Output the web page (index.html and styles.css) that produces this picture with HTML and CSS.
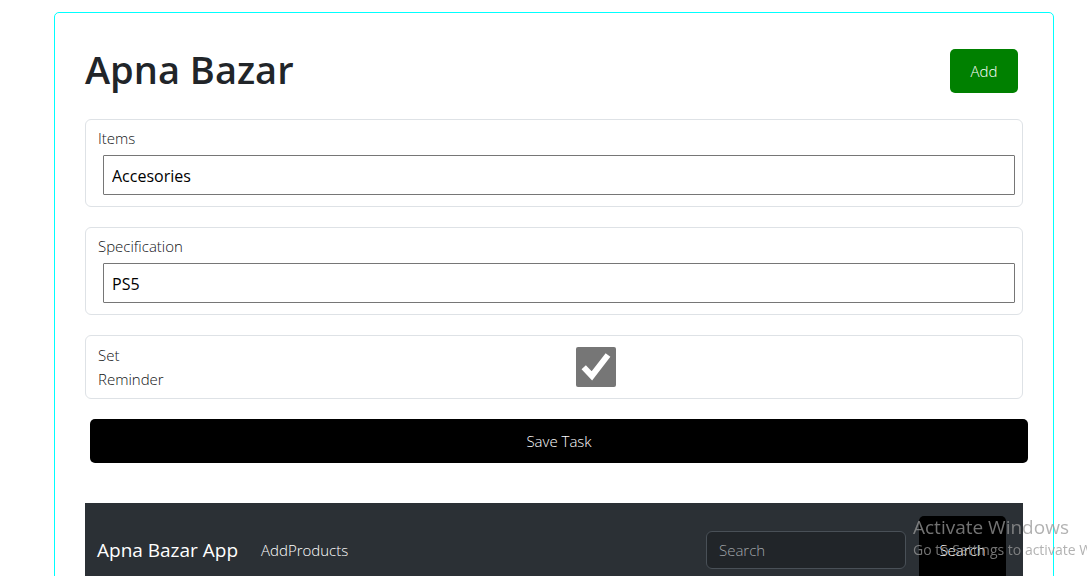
FILE: index.html
```html
<!DOCTYPE html>
<html lang="en">
<head>
<meta charset="utf-8">
<meta name="viewport" content="width=device-width, initial-scale=1">
<title>Apna Bazar</title>
<link rel="stylesheet" href="styles.css">
</head>
<body>
<main class="container">
  <header class="header">
    <h1 class="title">Apna Bazar</h1>
    <button class="btn btn-add" type="button">Add</button>
  </header>
  <form class="task-form">
    <div class="field">
      <label for="items">Items</label>
      <input class="text-input" id="items" type="text" value="Accesories">
    </div>
    <div class="field">
      <label for="spec">Specification</label>
      <input class="text-input" id="spec" type="text" value="PS5">
    </div>
    <div class="field field-check">
      <label for="reminder">Set Reminder</label>
      <span class="check-wrap">
        <input class="check" id="reminder" type="checkbox" checked>
        <svg class="tick" viewBox="0 0 40 40" aria-hidden="true"><path d="M7.7 20.2 L15.9 28.8 L32 8" fill="none" stroke="#fff" stroke-width="6"/></svg>
      </span>
    </div>
    <button class="btn btn-save" type="button">Save Task</button>
  </form>
  <nav class="navbar">
    <a class="brand" href="#">Apna Bazar App</a>
    <a class="nav-link" href="#">AddProducts</a>
    <form class="search" role="search">
      <input class="search-input" type="search" placeholder="Search" aria-label="Search">
      <button class="btn btn-search" type="button">Search</button>
    </form>
  </nav>
</main>
<aside class="watermark">
  <p class="watermark-title">Activate Windows</p>
  <p class="watermark-text">Go to Settings to activate Windows.</p>
</aside>
</body>
</html>
```
FILE: styles.css
```css
* { box-sizing: border-box; }

body {
  margin: 0;
  height: 100vh;
  overflow: hidden;
  background: #fff;
  color: #101214;
  font: 300 15px/24px "Open Sans", "Noto Sans", sans-serif;
}

.container {
  max-width: 1000px;
  margin: 12px 33px 30px 54px;
  padding: 30px;
  border: 1px solid #0ff;
  border-radius: 5px;
}

.header {
  display: flex;
  justify-content: space-between;
  align-items: flex-start;
  padding: 6px 5px 0 0;
  margin-bottom: 20px;
}

.title {
  margin: -4px 0 0;
  padding-bottom: 6px;
  color: #212529;
  font-size: 38px;
  font-weight: 600;
  line-height: 48px;
}

.btn {
  border: 0;
  border-radius: 5px;
  padding: 10px 20px;
  color: #fff;
  background: #000;
  font: inherit;
  cursor: pointer;
}

.btn-add {
  min-width: 68px;
  background: green;
}

.field {
  display: flex;
  flex-direction: column;
  margin-bottom: 20px;
  padding: 6px 7px 11px 12px;
  border: 1px solid #dee2e6;
  border-radius: 6px;
}

.text-input {
  height: 40px;
  margin: 5px 0 0 5px;
  padding: 4px 8px 2px;
  border: 1px solid #767676;
  border-radius: 1px;
  background: #fff;
  color: #000;
  font-family: inherit;
  font-size: 16px;
  font-weight: 400;
}

.field-check {
  flex-direction: row;
  align-items: center;
  padding: 7px 12px;
}

.field-check label { width: 84px; }

.check-wrap {
  display: grid;
  flex: 1;
  justify-items: center;
}

.check,
.tick {
  grid-area: 1 / 1;
  width: 40px;
  height: 40px;
}

.check {
  appearance: none;
  margin: 0;
  border-radius: 2px;
  background: #767676;
}

.tick { pointer-events: none; }

.btn-save {
  display: block;
  width: 100%;
  margin-left: 5px;
}

.navbar {
  display: flex;
  align-items: center;
  margin-top: 40px;
  padding: 8px 12px;
  background: #2b3035;
}

.navbar a {
  color: #fff;
  text-decoration: none;
}

.brand {
  margin-right: 23px;
  font-size: 19px;
  font-weight: 400;
}

.search {
  display: flex;
  align-items: center;
  margin-left: auto;
}

.search-input {
  width: 200px;
  height: 38px;
  margin-right: 8px;
  padding: 6px 12px;
  border: 1px solid #495057;
  border-radius: 6px;
  background: #212529;
  color: #dee2e6;
  font: inherit;
}

.search-input::placeholder { color: #a2a6aa; }

.btn-search {
  min-width: 87px;
  height: 68px;
  margin: 5px;
}

.watermark {
  position: fixed;
  left: 913px;
  bottom: 15px;
  color: #999;
  opacity: 0.75;
  font-weight: 400;
  white-space: nowrap;
  pointer-events: none;
}

.watermark p { margin: 0; }

.watermark-title { font-size: 19px; }

.watermark-text {
  font-size: 14px;
  line-height: 22px;
}
```
